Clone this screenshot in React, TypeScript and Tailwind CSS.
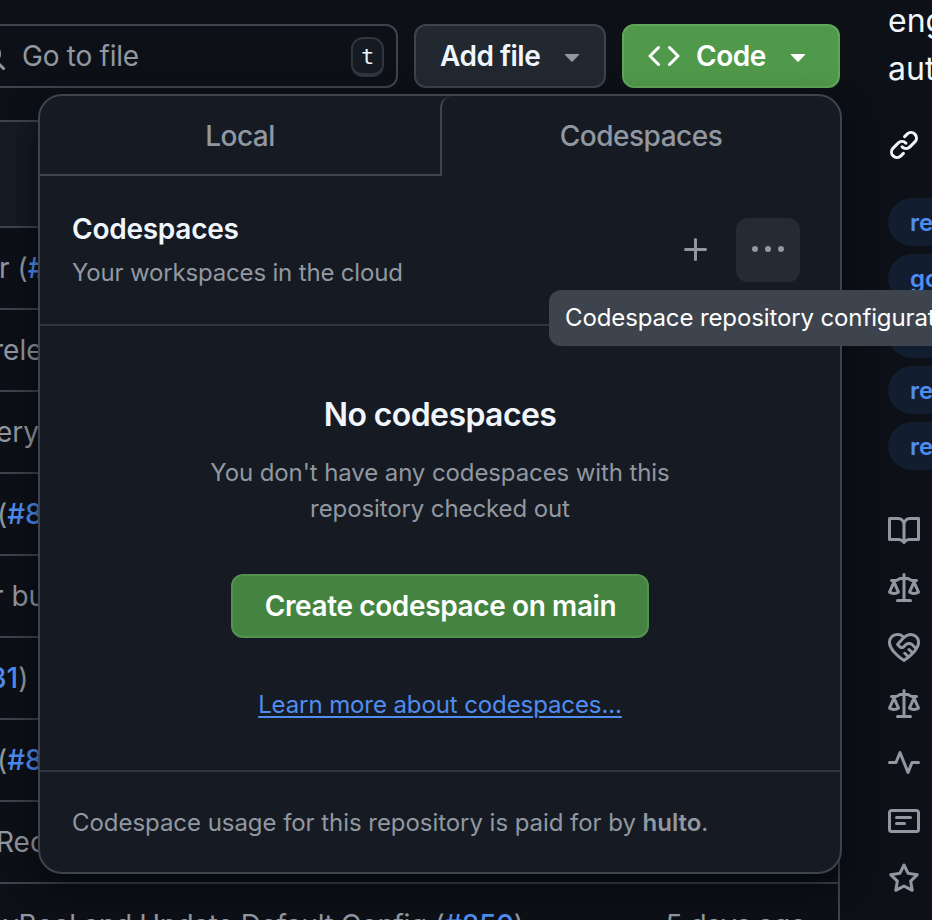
import type { ReactNode } from 'react';

const PATHS = {
  search:
    'M10.68 11.74a6 6 0 0 1-7.922-8.982 6 6 0 0 1 8.982 7.922l3.04 3.04a.749.749 0 0 1-.326 1.275.749.749 0 0 1-.734-.215ZM11.5 7a4.499 4.499 0 1 0-8.997 0A4.499 4.499 0 0 0 11.5 7Z',
  code: 'm11.28 3.22 4.25 4.25a.75.75 0 0 1 0 1.06l-4.25 4.25a.749.749 0 0 1-1.275-.326.749.749 0 0 1 .215-.734L13.94 8l-3.72-3.72a.749.749 0 0 1 .326-1.275.749.749 0 0 1 .734.215Zm-6.56 0a.751.751 0 0 1 1.042.018.751.751 0 0 1 .018 1.042L2.06 8l3.72 3.72a.749.749 0 0 1-.326 1.275.749.749 0 0 1-.734-.215L.47 8.53a.75.75 0 0 1 0-1.06Z',
  triangle: 'm4.427 7.427 3.396 3.396a.25.25 0 0 0 .354 0l3.396-3.396A.25.25 0 0 0 11.396 7H4.604a.25.25 0 0 0-.177.427Z',
  plus: 'M7.75 2a.75.75 0 0 1 .75.75V7h4.25a.75.75 0 0 1 0 1.5H8.5v4.25a.75.75 0 0 1-1.5 0V8.5H2.75a.75.75 0 0 1 0-1.5H7V2.75A.75.75 0 0 1 7.75 2Z',
  kebab: 'M8 9a1.5 1.5 0 1 0 0-3 1.5 1.5 0 0 0 0 3ZM1.5 9a1.5 1.5 0 1 0 0-3 1.5 1.5 0 0 0 0 3Zm13 0a1.5 1.5 0 1 0 0-3 1.5 1.5 0 0 0 0 3Z',
  link: 'm7.775 3.275 1.25-1.25a3.5 3.5 0 1 1 4.95 4.95l-2.5 2.5a3.5 3.5 0 0 1-4.95 0 .751.751 0 0 1 .018-1.042.751.751 0 0 1 1.042-.018 1.998 1.998 0 0 0 2.83 0l2.5-2.5a2.002 2.002 0 0 0-2.83-2.83l-1.25 1.25a.751.751 0 0 1-1.042-.018.751.751 0 0 1-.018-1.042Zm-4.69 9.64a1.998 1.998 0 0 0 2.83 0l1.25-1.25a.751.751 0 0 1 1.042.018.751.751 0 0 1 .018 1.042l-1.25 1.25a3.5 3.5 0 1 1-4.95-4.95l2.5-2.5a3.5 3.5 0 0 1 4.95 0 .751.751 0 0 1-.018 1.042.751.751 0 0 1-1.042.018 1.998 1.998 0 0 0-2.83 0l-2.5 2.5a1.998 1.998 0 0 0 0 2.83Z',
  book: 'M0 1.75A.75.75 0 0 1 .75 1h4.253c1.227 0 2.317.59 3 1.501A3.743 3.743 0 0 1 11.006 1h4.245a.75.75 0 0 1 .75.75v10.5a.75.75 0 0 1-.75.75h-4.507a2.25 2.25 0 0 0-1.591.659l-.622.621a.75.75 0 0 1-1.06 0l-.622-.621A2.25 2.25 0 0 0 5.258 13H.75a.75.75 0 0 1-.75-.75Zm7.251 10.324.004-5.073-.002-2.253A2.25 2.25 0 0 0 5.003 2.5H1.5v9h3.757a3.75 3.75 0 0 1 1.994.574ZM8.755 4.75l-.004 7.322a3.752 3.752 0 0 1 1.992-.572H14.5v-9h-3.495a2.25 2.25 0 0 0-2.25 2.25Z',
  law: 'M8.75.75V2h.985c.304 0 .603.08.867.231l1.29.736c.038.022.08.033.124.033h2.234a.75.75 0 0 1 0 1.5h-.427l2.111 4.692a.75.75 0 0 1-.154.838l-.53-.53.529.531-.001.002-.002.002-.006.006-.006.005-.01.01-.045.04c-.21.176-.441.327-.686.45C14.556 10.78 13.88 11 13 11a4.498 4.498 0 0 1-2.023-.454 3.544 3.544 0 0 1-.686-.45l-.045-.04-.016-.015-.006-.006-.004-.004v-.001a.75.75 0 0 1-.154-.838L12.178 4.5h-.162c-.305 0-.604-.079-.868-.231l-1.29-.736a.245.245 0 0 0-.124-.033H8.75V13h2.5a.75.75 0 0 1 0 1.5h-6.5a.75.75 0 0 1 0-1.5h2.5V3.5h-.984a.245.245 0 0 0-.124.033l-1.289.737c-.265.15-.564.23-.869.23h-.162l2.112 4.692a.75.75 0 0 1-.154.838l-.53-.53.529.531-.001.002-.002.002-.006.006-.016.015-.045.04c-.21.176-.441.327-.686.45C4.556 10.78 3.88 11 3 11a4.498 4.498 0 0 1-2.023-.454 3.544 3.544 0 0 1-.686-.45l-.045-.04-.016-.015-.006-.006-.004-.004v-.001a.75.75 0 0 1-.154-.838L2.178 4.5H1.75a.75.75 0 0 1 0-1.5h2.234a.249.249 0 0 0 .125-.033l1.288-.737c.265-.15.564-.23.869-.23h.984V.75a.75.75 0 0 1 1.5 0Zm2.945 8.477c.285.135.718.273 1.305.273s1.02-.138 1.305-.273L13 6.327Zm-10 0c.285.135.718.273 1.305.273s1.02-.138 1.305-.273L3 6.327Z',
  conduct:
    'M8.048 2.241c.964-.709 2.079-1.238 3.325-1.241a4.616 4.616 0 0 1 3.282 1.355c.41.408.757.86.996 1.428.238.568.348 1.206.347 1.968 0 2.193-1.505 4.254-3.081 5.862-1.496 1.526-3.213 2.796-4.249 3.563l-.22.163a.749.749 0 0 1-.895 0l-.221-.163c-1.036-.767-2.753-2.037-4.249-3.563C1.51 10.008.007 7.952.002 5.762a4.614 4.614 0 0 1 1.353-3.407C3.123.585 6.223.537 8.048 2.24Zm-1.153.983c-1.25-1.033-3.321-.967-4.48.191a3.115 3.115 0 0 0-.913 2.335c0 1.556 1.109 3.24 2.652 4.813C5.463 11.898 6.96 13.032 8 13.805c.353-.262.758-.565 1.191-.905l-1.326-1.223a.75.75 0 0 1 1.018-1.102l1.48 1.366c.328-.281.659-.577.984-.887L9.99 9.802a.75.75 0 1 1 1.019-1.103l1.384 1.28c.295-.329.566-.661.81-.995L12.92 8.7l-1.167-1.168c-.674-.671-1.78-.664-2.474.03-.268.269-.538.537-.802.797-.893.882-2.319.843-3.185-.032-.346-.35-.693-.697-1.043-1.047a.75.75 0 0 1-.04-1.016c.162-.191.336-.401.52-.623.62-.748 1.356-1.637 2.166-2.417Zm7.112 4.442c.313-.65.491-1.293.491-1.916v-.001c0-.614-.088-1.045-.23-1.385-.143-.339-.357-.633-.673-.949a3.111 3.111 0 0 0-2.218-.915c-1.092.003-2.165.627-3.226 1.602-.823.755-1.554 1.637-2.228 2.45l-.127.154.562.566a.755.755 0 0 0 1.066.02l.794-.79c1.258-1.258 3.312-1.31 4.594-.032.396.394.792.791 1.173 1.173Z',
  pulse: 'M6 2c.306 0 .582.187.696.471L10 10.731l1.304-3.26A.751.751 0 0 1 12 7h3.25a.75.75 0 0 1 0 1.5h-2.742l-1.812 4.528a.751.751 0 0 1-1.392 0L6 4.77 4.696 8.03A.75.75 0 0 1 4 8.5H.75a.75.75 0 0 1 0-1.5h2.742l1.812-4.529A.751.751 0 0 1 6 2Z',
  note: 'M0 3.75C0 2.784.784 2 1.75 2h12.5c.966 0 1.75.784 1.75 1.75v8.5A1.75 1.75 0 0 1 14.25 14H1.75A1.75 1.75 0 0 1 0 12.25Zm1.75-.25a.25.25 0 0 0-.25.25v8.5c0 .138.112.25.25.25h12.5a.25.25 0 0 0 .25-.25v-8.5a.25.25 0 0 0-.25-.25ZM3.5 6.25a.75.75 0 0 1 .75-.75h7a.75.75 0 0 1 0 1.5h-7a.75.75 0 0 1-.75-.75Zm.75 2.25h4a.75.75 0 0 1 0 1.5h-4a.75.75 0 0 1 0-1.5Z',
  star: 'M8 .25a.75.75 0 0 1 .673.418l1.882 3.815 4.21.612a.75.75 0 0 1 .416 1.279l-3.046 2.97.719 4.192a.751.751 0 0 1-1.088.791L8 12.347l-3.766 1.98a.75.75 0 0 1-1.088-.79l.72-4.194L.818 6.374a.75.75 0 0 1 .416-1.28l4.21-.611L7.327.668A.75.75 0 0 1 8 .25Zm0 2.445L6.615 5.5a.75.75 0 0 1-.564.41l-3.097.45 2.24 2.184a.75.75 0 0 1 .216.664l-.528 3.084 2.769-1.456a.75.75 0 0 1 .698 0l2.77 1.456-.53-3.084a.75.75 0 0 1 .216-.664l2.24-2.183-3.096-.45a.75.75 0 0 1-.564-.41L8 2.694Z',
};

type IconName = keyof typeof PATHS;

function Icon({ name, className = '' }: { name: IconName; className?: string }) {
  return (
    <svg viewBox="0 0 16 16" className={`size-8 shrink-0 fill-current ${className}`} aria-hidden="true">
      <path d={PATHS[name]} />
    </svg>
  );
}

function Toolbar() {
  return (
    <div className="flex h-16 gap-4">
      <div className="-ml-8 flex w-[430px] items-center rounded-r-xl border-2 border-[#3d444d] pr-3 text-[#9198a1]">
        <Icon name="search" className="ml-[5px]" />
        <span className="ml-[15px] flex-1 text-[28px] tracking-[-0.25px]">Go to file</span>
        <kbd className="mt-0.5 flex h-10 w-[33px] items-center justify-center rounded-xl border-2 border-b-4 border-[#30363e] bg-[#151b23] font-['DejaVu_Sans_Mono',monospace] text-[22px] text-[#f0f6fc]">
          t
        </kbd>
      </div>
      <button className="flex w-48 items-center rounded-xl border-2 border-[#3d444d] bg-[#212830] pl-6 text-[28px] font-semibold text-[#f0f6fc]">
        <span className="tracking-[-0.5px]">Add file</span>
        <Icon name="triangle" className="ml-4 text-[#9198a1]" />
      </button>
      <button className="flex w-[218px] items-center rounded-xl border-2 border-[#62a65a] bg-[#50984a] pl-6 text-[28px] font-semibold text-white">
        <Icon name="code" />
        <span className="ml-4 tracking-[-0.5px]">Code</span>
        <Icon name="triangle" className="ml-4" />
      </button>
    </div>
  );
}

const Ref = ({ children }: { children: ReactNode }) => (
  <span className="font-medium text-[#4f8df0]">{children}</span>
);

const ROWS: { offset: string; text: ReactNode }[] = [
  { offset: '-ml-px', text: <>r (<Ref>#8</Ref></> },
  { offset: '-ml-[7px]', text: 'relea' },
  { offset: '-ml-1', text: 'ery' },
  { offset: '-ml-[3px]', text: <>(<Ref>#8</Ref></> },
  { offset: '-ml-[7px]', text: 'r bui' },
  { offset: '-ml-[11px]', text: <><Ref>31</Ref>)</> },
  { offset: '-ml-[3px]', text: <>(<Ref>#8</Ref></> },
  { offset: '-ml-[4px]', text: 'Rec' },
];

function FileTable() {
  return (
    <div className="mt-8 border-t-2 border-r-2 border-[#3d444d] text-[28px] text-[#9198a1]">
      <div className="h-[104px] bg-[#151b23]" />
      {ROWS.map((row, i) => (
        <div key={i} className="flex h-[82px] items-center border-t-2 border-[#3d444d] whitespace-nowrap">
          <span className={row.offset}>{row.text}</span>
        </div>
      ))}
      <div className="flex h-[82px] items-center justify-between border-t-2 border-[#3d444d] pt-px pr-8 whitespace-nowrap">
        <span className="ml-[3px] tracking-[-0.35px]">
          yBool and Update Default Config (<Ref>#850</Ref>)
        </span>
        <span className="tracking-[-0.5px]">5 days ago</span>
      </div>
    </div>
  );
}

const TOPICS = ['re', 'go', 're', 're', 're'];
const LINKS: IconName[] = ['book', 'law', 'conduct', 'law', 'pulse', 'note', 'star'];

function Sidebar() {
  return (
    <aside className="flex w-11 shrink-0 flex-col whitespace-nowrap">
      <div className="-mt-[3px] text-[32px] leading-[48px] text-[#f0f6fc]">
        <div>engine</div>
        <div>automation</div>
      </div>
      <Icon name="link" className="mt-9 text-[#f0f6fc]" />
      <div className="mt-[37px] flex flex-col gap-2">
        {TOPICS.map((topic, i) => (
          <span key={i} className="flex h-12 w-32 items-center rounded-full bg-[#121d2f] pt-0.5 pl-[22px] text-2xl font-semibold text-[#4f8df0]">
            {topic}
          </span>
        ))}
      </div>
      <div className="mt-[45px] flex flex-col gap-[26px] text-[#9198a1]">
        {LINKS.map((name, i) => (
          <Icon key={i} name={name} />
        ))}
      </div>
    </aside>
  );
}

function CodespacesMenu() {
  return (
    <div className="absolute top-[94px] left-[38px] flex h-[780px] w-[804px] flex-col rounded-3xl border-2 border-[#3d444d] bg-[#161b23] shadow-[0_12px_24px_-6px_rgba(1,4,9,0.4),0_12px_36px_rgba(1,4,9,0.4)]">
      <div className="flex h-20 text-[28px] font-medium tracking-[-0.5px] text-[#9198a1]">
        <div className="flex w-[400px] items-center justify-center border-b-2 border-[#3d444d] pt-0.5">Local</div>
        <div className="flex flex-1 items-center justify-center rounded-tl-xl border-l-2 border-[#3d444d]">Codespaces</div>
      </div>
      <div className="flex h-[150px] items-center justify-between border-b-2 border-[#30363e] px-8">
        <div className="pt-0.5">
          <h2 className="text-[28px] leading-[42px] font-semibold tracking-[-0.25px] text-[#f0f6fc]">Codespaces</h2>
          <p className="pt-px text-2xl leading-[43px] tracking-[-0.17px] text-[#9198a1]">Your workspaces in the cloud</p>
        </div>
        <div className="mr-2 flex items-center gap-2 text-[#9198a1]">
          <span className="flex size-16 items-center justify-center">
            <Icon name="plus" />
          </span>
          <span className="flex size-16 items-center justify-center rounded-xl bg-[#262b33]">
            <Icon name="kebab" />
          </span>
        </div>
      </div>
      <div className="flex flex-1 flex-col items-center pt-[65px] text-2xl text-[#9198a1]">
        <h3 className="text-[32px] leading-[48px] font-semibold tracking-[-0.6px] text-[#f0f6fc]">No codespaces</h3>
        <p className="mt-4 text-center leading-9 tracking-[-0.1px]">
          You don't have any codespaces with this
          <br />
          repository checked out
        </p>
        <button className="mt-[47px] flex h-16 w-[418px] items-center justify-center rounded-xl border-2 border-[#549250] bg-[#448440] pt-0.5 pl-px text-[28px] font-semibold tracking-[-0.38px] text-white">
          Create codespace on main
        </button>
        <a className="mt-[49px] leading-9 tracking-[-0.1px] text-[#4f8df0] underline decoration-2 underline-offset-[3px]">
          Learn more about codespaces...
        </a>
      </div>
      <div className="flex h-[102px] items-center border-t-2 border-[#30363e] px-8 pt-0.5 text-2xl tracking-[-0.05px] text-[#9198a1]">
        <p>
          Codespace usage for this repository is paid for by <b className="font-semibold">hulto</b>.
        </p>
      </div>
    </div>
  );
}

export default function App() {
  return (
    <div className="relative h-[920px] w-[932px] overflow-hidden bg-[#0d1117] font-[Inter,'Liberation_Sans',sans-serif]">
      <div className="flex gap-12">
        <main className="w-[840px] shrink-0 pt-6">
          <Toolbar />
          <FileTable />
        </main>
        <Sidebar />
      </div>
      <CodespacesMenu />
      <div className="absolute top-[290px] left-[549px] flex h-14 items-center rounded-xl bg-[#3d444d] px-4 text-2xl tracking-[-0.12px] whitespace-nowrap text-white">
        Codespace repository configuration
      </div>
    </div>
  );
}
